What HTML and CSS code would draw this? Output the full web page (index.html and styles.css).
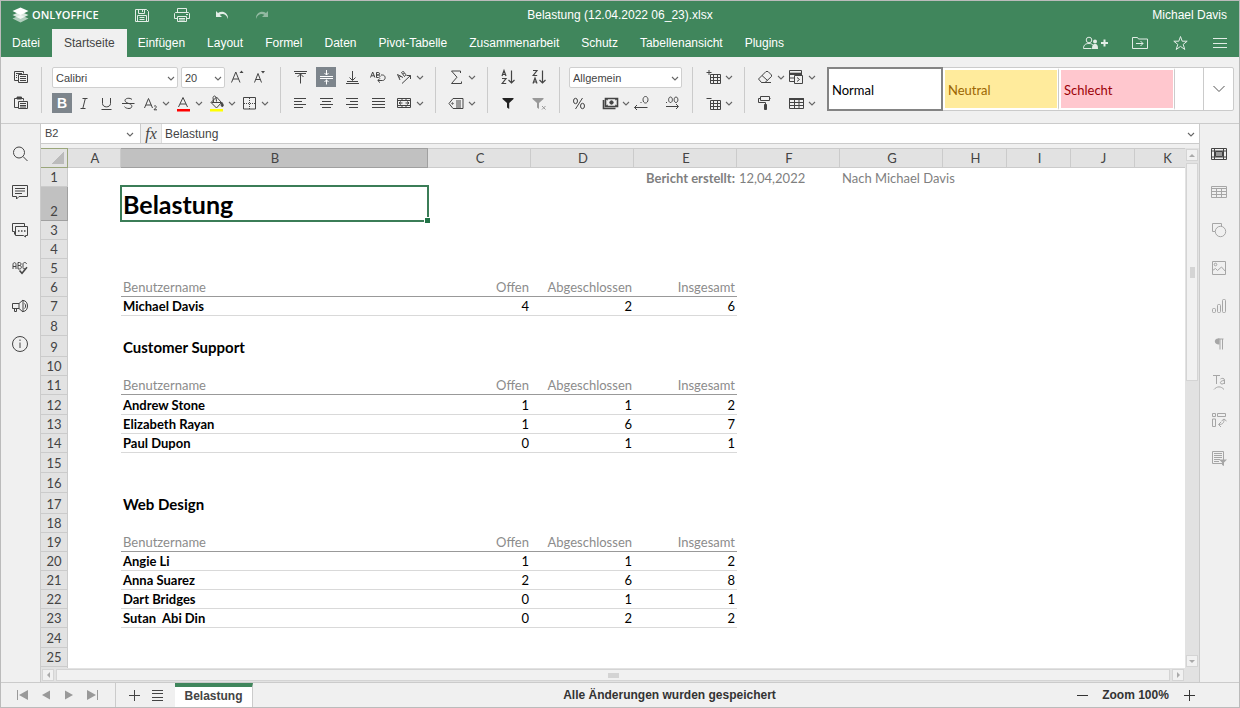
FILE: index.html
```html
<!DOCTYPE html>
<html lang="de">
<head>
<meta charset="utf-8">
<title>Belastung (12.04.2022 06_23).xlsx</title>
<link rel="stylesheet" href="styles.css">
</head>
<body>
<svg class="sprite" aria-hidden="true">
  <symbol id="chev" viewBox="0 0 11 20"><path d="M3 9l3 3 3-3" fill="none" stroke="currentColor" stroke-width="1.1"/></symbol>
  <symbol id="save" viewBox="0 0 20 20"><path d="M3.500 4.500h11l2 2v10h-13zM6.500 4.500v4h6v-4M10.500 5v2M5.500 16.500v-6h9v6M7.500 12.500h5M7.500 14.500h5"/></symbol>
  <symbol id="print" viewBox="0 0 20 20"><path d="M5.500 7.500v-4h9v4M5.500 13.500h-3v-5l1-1h13l1 1v5h-3M5.500 11.500h9v5h-9zM7 13.500h6M7 15h6M14 9.500h2"/></symbol>
  <symbol id="undo" viewBox="0 0 20 20"><path d="M4 6v6h6L7.700 9.700C11 8 14.500 9.500 16 14 16.500 8 10.500 5 6 8z" fill="currentColor" stroke="none"/></symbol>
  <symbol id="redo" viewBox="0 0 20 20"><path d="M16 6v6h-6l2.300-2.300C9 8 5.500 9.500 4 14 3.500 8 9.500 5 14 8z" fill="currentColor" stroke="none"/></symbol>
  <symbol id="share" viewBox="0 0 28 20"><circle cx="7" cy="7" r="2.800"/><path d="M1.500 15.500c0-4 2.500-5 5.500-5 2 0 3.500.6 4.500 2M1.500 15.500h8"/><g fill="currentColor" stroke="none"><circle cx="13" cy="8.500" r="2"/><path d="M10 16c0-4 1-5 3-5s3 1 3 5z"/><path d="M19 9h7v2h-7zM21.500 6.500h2v7h-2z"/></g></symbol>
  <symbol id="folder" viewBox="0 0 20 20"><path d="M2.500 15.500v-11h5l1 1.500h9v9.500zM6 10.500h7M10.500 8l2.500 2.500-2.500 2.500"/></symbol>
  <symbol id="star" viewBox="0 0 20 20"><path d="M10.500 3.500l1.700 4.700h5l-4 3.200 1.600 5.100-4.300-3.100-4.300 3.100 1.600-5.100-4-3.200h5z"/></symbol>
  <symbol id="menu" viewBox="0 0 20 20"><path d="M3 5.500h14M3 10.500h14M3 14.500h14"/></symbol>
  <symbol id="copy" viewBox="0 0 20 20"><path d="M7 13.500H3.500v-9h9v2M5 6.500h6M5 8.500h1M5 10.500h1M7.500 7.500h9v8h-9zM9 9.500h6M9 11.500h6M9 13.500h6"/></symbol>
  <symbol id="paste" viewBox="0 0 20 20"><path d="M7 14.500H3.500v-9h9v2M7.500 8.500h9v7h-9zM9 10.500h6M9 12.500h6M9 14h6"/><path d="M6 4h4.500v2H6z" fill="currentColor"/></symbol>
  <symbol id="fontup" viewBox="0 0 20 20"><path d="M4.500 15.500l4.300-10.500 4.200 10.500M6 12h5.500"/><path d="M12.500 6l2-2.500 2 2.500z" fill="currentColor" stroke="none"/></symbol>
  <symbol id="fontdown" viewBox="0 0 20 20"><path d="M5.500 15.500l3.500-9 3.500 9M6.800 12.500h4.500"/><path d="M12 4l2 2.500 2-2.500z" fill="currentColor" stroke="none"/></symbol>
  <symbol id="italic" viewBox="0 0 20 20"><path d="M8.500 5.500h5M6.500 15.500h5M11.300 5.500l-2.500 10"/></symbol>
  <symbol id="underline" viewBox="0 0 20 20"><path d="M6.500 5v5.500c0 4.500 8 4.500 8 0V5M5.500 16.500h10"/></symbol>
  <symbol id="strike" viewBox="0 0 20 20"><path d="M14 6.500c-2-2-7-1.500-7 1 0 1.500 2 2.300 3.500 2.800M4 10.500h12.500M11 10.500c4 1 3.500 5 0 5-2 0-3.500-.6-4.500-1.800"/></symbol>
  <symbol id="sub" viewBox="0 0 20 20"><path d="M4.500 15l4-9.500 4 9.500M6 12h5.200M14 13.500c1-1.500 3-.3 2 1l-2 2.300h3"/></symbol>
  <symbol id="fcolor" viewBox="0 0 20 20"><path d="M5.500 14l4.500-9.500 4.500 9.500M7 11h6"/><path d="M4 16h13v2.500H4z" fill="#f00" stroke="none"/></symbol>
  <symbol id="fill" viewBox="0 0 20 20"><path d="M5 9.500l5.500-5.500 5 5.500-5 5.500zM7.500 9L7 4.500c.5-2 2.500-2 3 0l.5 4M5.500 9.500h10"/><path d="M16 9.500c1.500 2 1.800 4 .3 4s-1.500-2-.3-4z" fill="currentColor"/><path d="M4 16h13v2.500H4z" fill="#ff0" stroke="none"/></symbol>
  <symbol id="borders" viewBox="0 0 20 20"><path d="M4.500 4.500h12v11.500h-12z"/><path d="M10.500 5v11M5 10.500h11" stroke-dasharray="1 1"/></symbol>
  <symbol id="top" viewBox="0 0 20 20"><path d="M4 4.500h13M5 6.500h11M10.500 7v9.500M7.500 10l3-3 3 3"/></symbol>
  <symbol id="middle" viewBox="0 0 20 20"><path d="M4 9.500h13M4 11.500h13M10.500 3v5M8.500 6l2 2 2-2M10.500 17.500v-5M8.500 15l2-2 2 2"/></symbol>
  <symbol id="bottom" viewBox="0 0 20 20"><path d="M4 16.500h13M5 14.500h11M10.500 4v9M7.500 10.500l3 3 3-3"/></symbol>
  <symbol id="wrap" viewBox="0 0 20 20"><path d="M2.500 10.500L4.700 5l2.200 5.500M3.300 8.800h2.800M8.500 5.500v5h2c2 0 2-2.500 0-2.500h-2 1.700c2 0 1.800-2.500 0-2.500zM13 8h1.500c3.500 0 3.500 5.500 0 5.500H10M12 11.300l-2.200 2.200 2.200 2.200"/></symbol>
  <symbol id="orient" viewBox="0 0 20 20"><path d="M6 13L3.500 7.500 9 10.500M5 10.500l2-1.500M10.500 9.500L7.500 5.500c2-2 3.500-.5 2 1.300 1.700-1.300 3.500.7 1 2.700zM8 16.500l8.500-8M12.500 8.500h4V12"/></symbol>
  <symbol id="left" viewBox="0 0 20 20"><path d="M4 5.500h12M4 8.500h8M4 11.500h12M4 14.500h9"/></symbol>
  <symbol id="center" viewBox="0 0 20 20"><path d="M4 5.500h13M6 8.500h9M4 11.500h13M6 14.500h9"/></symbol>
  <symbol id="right" viewBox="0 0 20 20"><path d="M4 5.500h12M8 8.500h8M4 11.500h12M7 14.500h9"/></symbol>
  <symbol id="justify" viewBox="0 0 20 20"><path d="M4 5.500h13M4 8.500h13M4 11.500h13M4 14.500h13"/></symbol>
  <symbol id="merge" viewBox="0 0 20 20"><path d="M3.500 5.500h13v9h-13zM3.500 7.500h13M3.500 12.500h13M8 5.500v2M12 5.500v2M8 12.500v2M12 12.500v2M5 10h3.500M11.500 10H15M7 8.500L5 10l2 1.500M13 8.500l2 1.500-2 1.500"/></symbol>
  <symbol id="sum" viewBox="0 0 20 20"><path d="M14.500 6V4h-9l5.500 6.200-5.500 6.300h10v-2"/></symbol>
  <symbol id="named" viewBox="0 0 20 20"><path d="M7 5.500h10v10H7L3 10.500zM10 8h5M10 10h5M10 12h5M10 14h5"/><circle cx="6.500" cy="10.500" r=".7"/></symbol>
  <symbol id="az" viewBox="0 0 20 20"><path d="M4 9l2-5.500L8 9M4.500 7.500h3M4 11.500h4L4.200 16.500h4M13.500 3.500v12M10.500 13l3 3 3-3" stroke-width="1.200"/></symbol>
  <symbol id="za" viewBox="0 0 20 20"><path d="M4 3.500h4L4.200 8.500h4M4 16.500l2-5.500 2 5.500M4.500 15h3M13.500 3.500v12M10.500 13l3 3 3-3" stroke-width="1.200"/></symbol>
  <symbol id="filter" viewBox="0 0 20 20"><path d="M4.500 5h11v1l-4.300 4v6L9 14.500V10L4.500 6z" fill="currentColor" stroke="none"/></symbol>
  <symbol id="nofilter" viewBox="0 0 20 20"><path d="M3.500 5h11v1L10 10v6l-2-1.500V10L3.500 6z" fill="currentColor" stroke="none"/><path d="M13 13l3.500 3.500M16.500 13L13 16.500"/></symbol>
  <symbol id="percent" viewBox="0 0 20 20"><ellipse cx="6.500" cy="8" rx="2" ry="2.700"/><ellipse cx="13.500" cy="13" rx="2" ry="2.700"/><path d="M13.500 5l-7 11"/></symbol>
  <symbol id="cash" viewBox="0 0 20 20"><path d="M5.500 5.500h12v8h-12zM3.500 7v8.500h12" stroke-width="1.600"/><circle cx="11.500" cy="9.500" r="1.700" fill="currentColor"/><path d="M6 6l2 1M17 6l-2 1M6 13l2-1M17 13l-2-1"/></symbol>
  <symbol id="decless" viewBox="0 0 20 20"><path d="M9.500 9.500h1M14.500 3.500c-3.300 0-3.300 6.500 0 6.500s3.300-6.500 0-6.500zM3.500 14.500h13M6 12l-2.500 2.500L6 17"/></symbol>
  <symbol id="decmore" viewBox="0 0 20 20"><path d="M4 9.500h1M8.500 4c-2.500 0-2.500 5.500 0 5.500S11 4 8.500 4zM14 4c-2.500 0-2.500 5.500 0 5.500s2.500-5.500 0-5.500zM4 13.500h12M14 11l2.500 2.500L14 16"/></symbol>
  <symbol id="cellins" viewBox="0 0 20 20"><path d="M7.500 7.500h10v9h-10zM7.500 10.500h10M7.500 13.500h10M10.500 7.500v9M14.500 7.500v9M3.500 5.500h5M6 3v5"/></symbol>
  <symbol id="celldel" viewBox="0 0 20 20"><path d="M7.500 7.500h10v9h-10zM7.500 10.500h10M7.500 13.500h10M10.500 7.500v9M14.500 7.500v9M3.500 5.500h5"/></symbol>
  <symbol id="eraser" viewBox="0 0 20 20"><path d="M3.500 12l7.500-7.500h2l3.500 3.500v1.500L10 15.500H6.500zM7 8.500l5.500 5M6.500 15.500H16"/></symbol>
  <symbol id="cond" viewBox="0 0 20 20"><path d="M8 14.500H3.500v-11h12V8M3.500 7.500h12M3.500 11h4.500M8.500 8.500h8v8h-8zM11 10.500l2.500 2-2.500 2"/><path d="M4 6h11v1.500H4z" fill="currentColor" stroke-width=".6"/></symbol>
  <symbol id="paint" viewBox="0 0 20 20"><path d="M5.500 3.500h9v4h-9zM5.500 5.500h-2v4h7v3M14.500 5.500h1"/><path d="M9.500 11.500h2v5h-2z" fill="currentColor"/></symbol>
  <symbol id="tpl" viewBox="0 0 20 20"><path d="M3.500 5.500h14v10h-14zM3.500 9.500h14M3.500 12.500h14M8.500 5.500v10M13 5.500v10"/><path d="M3.500 5.500h14v1h-14z" fill="currentColor"/></symbol>
  <symbol id="search" viewBox="0 0 20 20"><circle cx="9" cy="8.500" r="5.500"/><path d="M13 12.500l4.500 4.500"/></symbol>
  <symbol id="comment" viewBox="0 0 20 20"><path d="M2.500 3.500h15v11H9L6.500 17v-2.500h-4zM5 6.500h10M5 9h10M5 11.500h7"/></symbol>
  <symbol id="chat" viewBox="0 0 20 20"><path d="M4.500 14.500v-3h-2v-8h12v3M5.500 6.500h12v9h-2v1.500l-2-1.500h-8z"/><path d="M8 11h1.500M11 11h1.500M14 11h1.500" stroke-width="1.500"/></symbol>
  <symbol id="spell" viewBox="0 0 20 20"><path d="M3 11V6.500c0-2.500 3-2.500 3 0V11M3 8.500h3M8 4.500V11h1.500c2.500 0 2.500-3.500 0-3.500H8h1.500c2 0 2-3 0-3zM16.500 6c0-2-3.500-2-3.500 0v3.500c0 1.500 1 1.500 2 1"/><path d="M9.500 12.500l2.500 2.800 5-6" stroke-width="1.500"/></symbol>
  <symbol id="horn" viewBox="0 0 20 20"><path d="M2.500 7.500H9l4-3.500v12l-4-3.500H2.500zM9 7.500v5M4.500 12.500v3h2v-3M13 4.500c6 0 6 11 0 11M14.500 7.500c1.500 1 1.500 4 0 5"/></symbol>
  <symbol id="info" viewBox="0 0 20 20"><circle cx="10" cy="10" r="7.500"/><path d="M10 8.500V14M10 5.500V7"/></symbol>
  <symbol id="cellset" viewBox="0 0 20 20"><path d="M2.500 4.500h15v11h-15zM2.500 7h15M2.500 13h15M5.500 4.500v11M14.500 4.500v11"/><path d="M6.500 7.500h7v5h-7z" fill="#999"/></symbol>
  <symbol id="tableset" viewBox="0 0 20 20"><path d="M2.500 4.500h15v11h-15zM2.500 6.500h15M2.500 9.500h15M2.500 12.500h15M7.500 6.500v9M12.500 6.500v9"/></symbol>
  <symbol id="shape" viewBox="0 0 20 20"><path d="M6 11.500H3.500v-8h9V6"/><circle cx="11.500" cy="11.500" r="5.200"/></symbol>
  <symbol id="image" viewBox="0 0 20 20"><path d="M3.500 3.500h13v13h-13zM3.500 12.500l3-2 2 2 4-3.500 4 4.500"/><circle cx="6.500" cy="6.500" r="1.300"/></symbol>
  <symbol id="chart" viewBox="0 0 20 20"><rect x="3.500" y="12.500" width="3" height="4" rx="1"/><rect x="8.500" y="8.500" width="3" height="8" rx="1"/><rect x="13.500" y="3.500" width="3" height="13" rx="1"/></symbol>
  <symbol id="para" viewBox="0 0 20 20"><path d="M11 5v10.500M13.500 5v10.500M9 5h5.500"/><path d="M10.500 4.500v6C4.500 11 4.500 4.500 9 4.500z" fill="currentColor" stroke="none"/></symbol>
  <symbol id="textart" viewBox="0 0 20 20"><path d="M4 3.500h7M7.500 3.500V12M11.500 7c1-1 4-1 4 1v4M15.500 8.500c-5 0-5 3.500-2.500 3.500 1.500 0 2.500-1 2.500-2M5 17.500c3-3.500 7-3.500 10 0"/></symbol>
  <symbol id="pivot" viewBox="0 0 20 20"><path d="M3.500 3.500h3v3h-3zM8.500 3.500h8v3h-8zM3.500 9h3v7.500h-3zM10 14.500c4 0 5-2 5-5M12.500 11L15 9l2.500 2M12 12l-2.500 2.500L12 17"/></symbol>
  <symbol id="slicer" viewBox="0 0 20 20"><path d="M3.500 3.500h11v12h-11zM5 5.500h8M5 7.500h8M5 9.500h8M5 11.500h6M5 13.500h5"/><path d="M10 11.500h8l-3 3V18l-2-1v-2.500z" fill="currentColor" stroke="none"/></symbol>
  <symbol id="first" viewBox="0 0 20 20"><path d="M4.500 5v10"/><path d="M15 5v10l-9-5z" fill="currentColor" stroke="none"/></symbol>
  <symbol id="prev" viewBox="0 0 20 20"><path d="M14 5.500v9l-8-4.500z" fill="currentColor" stroke="none"/></symbol>
  <symbol id="next" viewBox="0 0 20 20"><path d="M6 5.500v9l8-4.500z" fill="currentColor" stroke="none"/></symbol>
  <symbol id="last" viewBox="0 0 20 20"><path d="M15.500 5v10"/><path d="M5 5v10l9-5z" fill="currentColor" stroke="none"/></symbol>
  <symbol id="plus" viewBox="0 0 20 20"><path d="M5 10.500h11M10.500 5v11"/></symbol>
  <symbol id="minus" viewBox="0 0 20 20"><path d="M5 10.500h11"/></symbol>
  <symbol id="list" viewBox="0 0 20 20"><path d="M5 5.500h11M5 8.500h11M5 12.500h11M5 15.500h11"/></symbol>
</svg>

<div class="app">
  <header class="header">
    <div class="titlebar">
      <div class="brand">
        <svg class="mark" viewBox="0 0 16 16"><path d="M8 8l8 3.500L8 15.500 0 11.500z" opacity=".6"/><path d="M8 4.500L16 8l-8 4-8-4z" opacity=".8"/><path d="M8 .5L16 4 8 8 0 4z"/></svg>
        <span>ONLYOFFICE</span>
      </div>
      <div class="quick">
        <button aria-label="Speichern"><svg class="ic"><use href="#save"/></svg></button>
        <button aria-label="Drucken"><svg class="ic"><use href="#print"/></svg></button>
        <button aria-label="Rückgängig"><svg class="ic"><use href="#undo"/></svg></button>
        <button class="faded" aria-label="Wiederholen"><svg class="ic"><use href="#redo"/></svg></button>
      </div>
      <div class="doc-title">Belastung (12.04.2022 06_23).xlsx</div>
      <div class="user">Michael Davis</div>
    </div>
    <div class="tabbar">
      <nav class="tabs">
        <button>Datei</button><button class="active">Startseite</button><button>Einfügen</button><button>Layout</button><button>Formel</button><button>Daten</button><button>Pivot-Tabelle</button><button>Zusammenarbeit</button><button>Schutz</button><button>Tabellenansicht</button><button>Plugins</button>
      </nav>
      <div class="actions">
        <button aria-label="Freigeben"><svg class="ic wide"><use href="#share"/></svg></button>
        <button aria-label="Dateispeicherort öffnen"><svg class="ic"><use href="#folder"/></svg></button>
        <button aria-label="Favorit"><svg class="ic"><use href="#star"/></svg></button>
        <button aria-label="Ansicht"><svg class="ic"><use href="#menu"/></svg></button>
      </div>
    </div>
  </header>

  <div class="toolbar">
    <div class="group">
      <div class="line"><button aria-label="Kopieren"><svg class="ic"><use href="#copy"/></svg></button></div>
      <div class="line"><button aria-label="Einfügen"><svg class="ic"><use href="#paste"/></svg></button></div>
    </div>
    <div class="group font">
      <div class="line">
        <span class="combo font-name"><select aria-label="Schriftart"><option>Calibri</option></select><svg class="chev"><use href="#chev"/></svg></span>
        <span class="combo font-size"><select aria-label="Schriftgröße"><option>20</option></select><svg class="chev"><use href="#chev"/></svg></span>
        <button aria-label="Schrift vergrößern"><svg class="ic"><use href="#fontup"/></svg></button>
        <button aria-label="Schrift verkleinern"><svg class="ic"><use href="#fontdown"/></svg></button>
      </div>
      <div class="line">
        <button class="on bold">B</button>
        <button aria-label="Kursiv"><svg class="ic"><use href="#italic"/></svg></button>
        <button aria-label="Unterstrichen"><svg class="ic"><use href="#underline"/></svg></button>
        <button aria-label="Durchgestrichen"><svg class="ic"><use href="#strike"/></svg></button>
        <button aria-label="Tiefgestellt"><svg class="ic"><use href="#sub"/></svg><svg class="chev"><use href="#chev"/></svg></button>
        <button aria-label="Schriftfarbe"><svg class="ic"><use href="#fcolor"/></svg><svg class="chev"><use href="#chev"/></svg></button>
        <button aria-label="Füllfarbe"><svg class="ic"><use href="#fill"/></svg><svg class="chev"><use href="#chev"/></svg></button>
        <button aria-label="Rahmen"><svg class="ic"><use href="#borders"/></svg><svg class="chev"><use href="#chev"/></svg></button>
      </div>
    </div>
    <div class="group align">
      <div class="line">
        <button aria-label="Oben"><svg class="ic"><use href="#top"/></svg></button>
        <button class="on" aria-label="Mitte"><svg class="ic"><use href="#middle"/></svg></button>
        <button aria-label="Unten"><svg class="ic"><use href="#bottom"/></svg></button>
        <button aria-label="Umbruch"><svg class="ic"><use href="#wrap"/></svg></button>
        <button aria-label="Ausrichtung"><svg class="ic"><use href="#orient"/></svg><svg class="chev"><use href="#chev"/></svg></button>
      </div>
      <div class="line">
        <button aria-label="Links"><svg class="ic"><use href="#left"/></svg></button>
        <button aria-label="Zentriert"><svg class="ic"><use href="#center"/></svg></button>
        <button aria-label="Rechts"><svg class="ic"><use href="#right"/></svg></button>
        <button aria-label="Blocksatz"><svg class="ic"><use href="#justify"/></svg></button>
        <button aria-label="Verbinden"><svg class="ic"><use href="#merge"/></svg><svg class="chev"><use href="#chev"/></svg></button>
      </div>
    </div>
    <div class="group">
      <div class="line"><button aria-label="Summe"><svg class="ic"><use href="#sum"/></svg><svg class="chev"><use href="#chev"/></svg></button></div>
      <div class="line"><button aria-label="Benannte Bereiche"><svg class="ic"><use href="#named"/></svg><svg class="chev"><use href="#chev"/></svg></button></div>
    </div>
    <div class="group sort">
      <div class="line"><button aria-label="Aufsteigend"><svg class="ic"><use href="#az"/></svg></button><button aria-label="Absteigend"><svg class="ic"><use href="#za"/></svg></button></div>
      <div class="line"><button class="dark" aria-label="Filter"><svg class="ic"><use href="#filter"/></svg></button><button class="faded" aria-label="Filter leeren"><svg class="ic"><use href="#nofilter"/></svg></button></div>
    </div>
    <div class="group number">
      <div class="line"><span class="combo"><select aria-label="Zahlenformat"><option>Allgemein</option></select><svg class="chev"><use href="#chev"/></svg></span></div>
      <div class="line formats">
        <button aria-label="Prozent"><svg class="ic"><use href="#percent"/></svg></button>
        <button aria-label="Währung"><svg class="ic"><use href="#cash"/></svg><svg class="chev"><use href="#chev"/></svg></button>
        <button aria-label="Weniger Dezimalstellen"><svg class="ic"><use href="#decless"/></svg></button>
        <button aria-label="Mehr Dezimalstellen"><svg class="ic"><use href="#decmore"/></svg></button>
      </div>
    </div>
    <div class="group">
      <div class="line"><button aria-label="Zellen einfügen"><svg class="ic"><use href="#cellins"/></svg><svg class="chev"><use href="#chev"/></svg></button></div>
      <div class="line"><button aria-label="Zellen löschen"><svg class="ic"><use href="#celldel"/></svg><svg class="chev"><use href="#chev"/></svg></button></div>
    </div>
    <div class="group format">
      <div class="line"><button aria-label="Leeren"><svg class="ic"><use href="#eraser"/></svg><svg class="chev"><use href="#chev"/></svg></button><button aria-label="Bedingte Formatierung"><svg class="ic"><use href="#cond"/></svg><svg class="chev"><use href="#chev"/></svg></button></div>
      <div class="line"><button aria-label="Format kopieren"><svg class="ic"><use href="#paint"/></svg></button><button aria-label="Tabellenvorlage"><svg class="ic"><use href="#tpl"/></svg><svg class="chev"><use href="#chev"/></svg></button></div>
    </div>
    <div class="gallery">
      <button class="style normal">Normal</button>
      <button class="style neutral">Neutral</button>
      <button class="style bad">Schlecht</button>
      <span class="rest"></span>
      <button class="more" aria-label="Weitere Stile"><svg viewBox="0 0 12 8"><path d="M.5 1L6 6.500 11.500 1"/></svg></button>
    </div>
  </div>

  <main class="main">
    <aside class="rail left">
      <button aria-label="Suchen"><svg class="ic"><use href="#search"/></svg></button>
      <button aria-label="Kommentare"><svg class="ic"><use href="#comment"/></svg></button>
      <button aria-label="Chat"><svg class="ic"><use href="#chat"/></svg></button>
      <button aria-label="Rechtschreibprüfung"><svg class="ic"><use href="#spell"/></svg></button>
      <button aria-label="Feedback"><svg class="ic"><use href="#horn"/></svg></button>
      <button aria-label="Info"><svg class="ic"><use href="#info"/></svg></button>
    </aside>

    <section class="editor">
      <div class="formula">
        <span class="name-box"><input aria-label="Zellname" value="B2"><svg class="chev"><use href="#chev"/></svg></span>
        <button class="fx">fx</button>
        <input class="formula-input" aria-label="Formel" value="Belastung">
        <svg class="chev"><use href="#chev"/></svg>
      </div>
      <div class="viewport">
        <div class="sheet">
          <table>
            <colgroup><col class="c-num"><col class="c-a"><col class="c-b"><col class="c-m"><col class="c-m"><col class="c-m"><col class="c-m"><col class="c-m"><col class="c-s"><col class="c-s"><col class="c-s"><col class="c-s"></colgroup>
            <thead><tr><th class="corner"></th><th>A</th><th class="sel">B</th><th>C</th><th>D</th><th>E</th><th>F</th><th>G</th><th>H</th><th>I</th><th>J</th><th>K</th></tr></thead>
            <tbody>
              <tr><th>1</th><td></td><td></td><td></td><td></td><td class="created num">Bericht erstellt:</td><td class="note">12,04,2022</td><td class="note">Nach Michael Davis</td></tr>
              <tr class="title"><th class="sel">2</th><td></td><td class="cell-active">Belastung</td></tr>
              <tr><th>3</th></tr>
              <tr><th>4</th></tr>
              <tr><th>5</th></tr>
              <tr class="labels"><th>6</th><td></td><td>Benutzername</td><td>Offen</td><td>Abgeschlossen</td><td>Insgesamt</td></tr>
              <tr class="data"><th>7</th><td></td><td>Michael Davis</td><td>4</td><td>2</td><td>6</td></tr>
              <tr class="tall"><th>8</th></tr>
              <tr class="section"><th>9</th><td></td><td>Customer Support</td></tr>
              <tr><th>10</th></tr>
              <tr class="labels"><th>11</th><td></td><td>Benutzername</td><td>Offen</td><td>Abgeschlossen</td><td>Insgesamt</td></tr>
              <tr class="data tall"><th>12</th><td></td><td>Andrew Stone</td><td>1</td><td>1</td><td>2</td></tr>
              <tr class="data"><th>13</th><td></td><td>Elizabeth Rayan</td><td>1</td><td>6</td><td>7</td></tr>
              <tr class="data"><th>14</th><td></td><td>Paul Dupon</td><td>0</td><td>1</td><td>1</td></tr>
              <tr class="tall"><th>15</th></tr>
              <tr class="tall"><th>16</th></tr>
              <tr class="section"><th>17</th><td></td><td>Web Design</td></tr>
              <tr><th>18</th></tr>
              <tr class="labels"><th>19</th><td></td><td>Benutzername</td><td>Offen</td><td>Abgeschlossen</td><td>Insgesamt</td></tr>
              <tr class="data"><th>20</th><td></td><td>Angie Li</td><td>1</td><td>1</td><td>2</td></tr>
              <tr class="data"><th>21</th><td></td><td>Anna Suarez</td><td>2</td><td>6</td><td>8</td></tr>
              <tr class="data"><th>22</th><td></td><td>Dart Bridges</td><td>0</td><td>1</td><td>1</td></tr>
              <tr class="data"><th>23</th><td></td><td>Sutan&nbsp; Abi Din</td><td>0</td><td>2</td><td>2</td></tr>
              <tr class="tall"><th>24</th></tr>
              <tr><th>25</th></tr>
              <tr><th></th></tr>
            </tbody>
          </table>
        </div>
        <div class="vscroll"><span class="arrow up"></span><span class="thumb"></span><span class="track"></span><span class="arrow down"></span></div>
        <div class="hscroll"><span class="arrow prev"></span><span class="thumb"></span><span class="arrow next"></span></div>
        <div class="scroll-corner"></div>
      </div>
    </section>

    <aside class="rail right">
      <button class="current" aria-label="Zelleneinstellungen"><svg class="ic"><use href="#cellset"/></svg></button>
      <button aria-label="Tabelle"><svg class="ic"><use href="#tableset"/></svg></button>
      <button aria-label="Form"><svg class="ic"><use href="#shape"/></svg></button>
      <button aria-label="Bild"><svg class="ic"><use href="#image"/></svg></button>
      <button aria-label="Diagramm"><svg class="ic"><use href="#chart"/></svg></button>
      <button aria-label="Absatz"><svg class="ic"><use href="#para"/></svg></button>
      <button aria-label="TextArt"><svg class="ic"><use href="#textart"/></svg></button>
      <button aria-label="Pivot"><svg class="ic"><use href="#pivot"/></svg></button>
      <button aria-label="Datenschnitt"><svg class="ic"><use href="#slicer"/></svg></button>
    </aside>
  </main>

  <footer class="status">
    <div class="sheet-nav">
      <button aria-label="Erstes Blatt"><svg class="ic"><use href="#first"/></svg></button>
      <button aria-label="Vorheriges Blatt"><svg class="ic"><use href="#prev"/></svg></button>
      <button aria-label="Nächstes Blatt"><svg class="ic"><use href="#next"/></svg></button>
      <button aria-label="Letztes Blatt"><svg class="ic"><use href="#last"/></svg></button>
    </div>
    <div class="sheet-tools">
      <button aria-label="Blatt hinzufügen"><svg class="ic"><use href="#plus"/></svg></button>
      <button aria-label="Blattliste"><svg class="ic"><use href="#list"/></svg></button>
    </div>
    <button class="sheet-tab">Belastung</button>
    <div class="message">Alle Änderungen wurden gespeichert</div>
    <div class="zoom">
      <button aria-label="Verkleinern"><svg class="ic"><use href="#minus"/></svg></button>
      <span>Zoom 100%</span>
      <button aria-label="Vergrößern"><svg class="ic"><use href="#plus"/></svg></button>
    </div>
  </footer>
</div>
</body>
</html>
```
FILE: styles.css
```css
* { box-sizing: border-box; }

body {
  margin: 0;
  font: 12px/16px "Liberation Sans", Arial, sans-serif;
  color: #444;
}

button {
  display: flex;
  align-items: center;
  justify-content: center;
  margin: 0;
  padding: 0;
  border: 0;
  background: none;
  color: inherit;
  font: inherit;
}

input, select {
  margin: 0;
  border: 0;
  border-radius: 0;
  outline: 0;
  background: none;
  color: inherit;
  font: inherit;
  appearance: none;
}

.sprite { position: absolute; width: 0; height: 0; }

.ic {
  flex: none;
  width: 20px;
  height: 20px;
  fill: none;
  stroke: currentColor;
}

.ic.wide { width: 28px; }
.chev { flex: none; width: 11px; height: 20px; color: #666; }

.app {
  display: flex;
  flex-direction: column;
  height: 100vh;
  border: 1px solid #bbb;
  background: #f0f0f0;
  overflow: hidden;
}

/* Header */
.header { flex: none; background: #40865c; color: #fff; }
.header .ic { opacity: .85; }

.titlebar {
  display: grid;
  grid-template-columns: 120px 1fr auto 1fr;
  align-items: center;
  height: 28px;
}

.brand {
  display: flex;
  align-items: center;
  gap: 3px;
  padding-left: 11px;
  font: 600 11px/16px "Open Sans", sans-serif;
}

.mark { width: 17px; height: 16px; fill: #fff; }
.quick { display: flex; gap: 20px; padding-left: 11px; }
.faded { opacity: .5; }
.doc-title { margin-left: -120px; }
.user { padding-right: 12px; text-align: right; }

.tabbar { display: flex; justify-content: space-between; height: 28px; }
.tabs { display: flex; }
.tabs button { padding: 0 11px; }
.tabs button:first-child { padding-right: 12px; }
.tabs .active { padding: 0 12px; background: #f0f0f0; color: #444; }

.actions { display: flex; align-items: center; gap: 20px; padding-right: 9px; }

/* Toolbar */
.toolbar {
  display: flex;
  flex: none;
  height: 67px;
  padding: 10px 5px 10px 0;
  border-bottom: 1px solid #cbcbcb;
}

.group {
  display: flex;
  flex-direction: column;
  gap: 6px;
  padding: 0 10px;
  border-right: 1px solid #cbcbcb;
}

.line { display: flex; height: 20px; gap: 2px; }
.align { padding-left: 9px; }
.align .line { gap: 6px; }
.sort .line { gap: 11px; }
.format .line { justify-content: space-between; gap: 0; }
.format { border-right: 0; }
.number { width: 133px; padding-left: 9px; }
.formats { display: grid; grid-template-columns: 31px 31px 31px 20px; gap: 0; justify-items: start; }

.dark { color: #222; }
.on { background: #7d858c; color: #fff; }
.bold { width: 20px; font-size: 14px; font-weight: bold; }

.combo {
  display: flex;
  flex: 1;
  align-items: center;
  height: 21px;
  padding-right: 1px;
  border: 1px solid #cfcfcf;
  border-radius: 2px;
  background: #fff;
}

.combo select { flex: 1; min-width: 0; padding: 0 3px; font-size: 11px; }
.font-name { flex: none; width: 126px; }
.font-size { flex: none; width: 44px; margin: 0 0 0 1px; }

.gallery {
  display: flex;
  flex: 1;
  height: 44px;
  border: 1px solid #cbcbcb;
  border-radius: 2px;
  background: #fff;
}

.style {
  flex: none;
  justify-content: flex-start;
  width: 116px;
  padding: 2px 0 0 3px;
  border: 2px solid #fff;
  border-right: 1px solid #cbcbcb;
  background-clip: padding-box;
  font: 13px/16px Lato, sans-serif;
  box-shadow: inset -1px 0 #fff;
}

.normal { margin: -1px 0 -1px -1px; border: 2px solid #848484; color: #000; }
.neutral { background-color: #ffeb9c; color: #9c6500; }
.bad { background-color: #ffc7ce; color: #9c0006; }
.rest { flex: 1; }
.more { width: 30px; border-left: 1px solid #cbcbcb; }
.more svg { width: 12px; height: 8px; fill: none; stroke: #555; }

/* Body */
.main { display: flex; flex: 1; min-height: 0; }

.rail {
  display: flex;
  flex: none;
  flex-direction: column;
  align-items: center;
  gap: 18px;
  width: 40px;
  padding: 20px 1px 0 0;
}

.left { border-right: 1px solid #cbcbcb; }
.right { border-left: 1px solid #cbcbcb; color: #a6a6a6; }
.current { color: #444; }

.editor { display: flex; flex: 1; flex-direction: column; min-width: 0; }

.formula {
  display: flex;
  flex: none;
  height: 20px;
  margin-bottom: 4px;
  border-bottom: 1px solid #cbcbcb;
  background: #fff;
}

.formula > .chev { margin-right: 3px; }
.name-box { display: flex; width: 100px; padding-right: 5px; border-right: 1px solid #cbcbcb; }
.name-box input { flex: 1; min-width: 0; padding: 0 4px 1px; font-size: 11px; }
.fx { width: 21px; border-right: 1px solid #dcdcdc; background: #f0f0f0; font: italic 16px/18px "Liberation Serif", serif; }
.formula-input { flex: 1; min-width: 0; padding: 1px 3px 0; }

.viewport {
  display: grid;
  flex: 1;
  grid-template: minmax(0, 1fr) 14px / minmax(0, 1fr) 14px;
  min-height: 0;
}

/* Sheet */
.sheet { overflow: hidden; background: #fff; }

table {
  width: 1135px;
  border-spacing: 0;
  table-layout: fixed;
  font: 13px/18px Lato, sans-serif;
  color: #000;
}

.c-num { width: 27px; }
.c-a { width: 53px; }
.c-b { width: 307px; }
.c-m { width: 103px; }
.c-s { width: 64px; }

th, td { height: 19px; padding: 0 2px; white-space: nowrap; vertical-align: bottom; text-align: left; }

th {
  padding: 0;
  border-right: 1px solid #cbcbcb;
  border-bottom: 1px solid #cbcbcb;
  background: #e2e2e2;
  color: #444;
  font-weight: normal;
  text-align: center;
}

thead th { height: 20px; padding-left: 2px; border-top: 1px solid #cbcbcb; }
th.sel { border-color: #a0a0a0; background: #c1c1c1; }
.corner { background: linear-gradient(135deg, transparent 50%, #bbb 50%) no-repeat 11px 3px / 12px 12px #e2e2e2; border-color: #9aa67a; }

.tall > * { height: 20px; }
.section > * { height: 21px; }
.section td { font-size: 15px; font-weight: bold; line-height: 20px; }
.title > * { height: 34px; }
.title td { font-size: 25px; font-weight: bold; line-height: 34px; }

.created { color: #7f7f7f; font-weight: bold; }
.note { color: #7f7f7f; }
.num { text-align: right; }

.labels td { color: #8c8c8c; }
.labels td:nth-child(n+3) { border-bottom: 1px solid #999; }
.data td:nth-child(n+3) { border-bottom: 1px solid #d9d9d9; }
.data td:nth-child(3) { font-weight: bold; }
.labels td:nth-child(n+4), .data td:nth-child(n+4) { text-align: right; }

.cell-active { position: relative; }
.cell-active::before { content: ""; position: absolute; inset: -2px -1px -1px -1px; border: 2px solid #3b7d57; }
.cell-active::after { content: ""; position: absolute; right: -2px; bottom: -2px; width: 5px; height: 5px; border: solid #fff; border-width: 1px 0 0 1px; background: #217346; }

/* Scroll bars */
.vscroll { display: flex; flex-direction: column; gap: 2px; padding: 1px; background: #e2e2e2; }
.hscroll { display: flex; gap: 2px; padding: 1px; background: #e2e2e2; }
.scroll-corner { background: #e2e2e2; }
.thumb { display: flex; align-items: center; justify-content: center; border: 1px solid #d4d4d4; background: #f1f1f1; }
.vscroll .thumb { flex: 218; }
.vscroll .track { flex: 272; }
.hscroll .thumb { flex: 1; }
.thumb::after { content: ""; background: #d4d4d4; }
.vscroll .thumb::after { width: 5px; height: 11px; }
.hscroll .thumb::after { width: 11px; height: 5px; }
.arrow { display: flex; flex: none; align-items: center; justify-content: center; width: 12px; height: 12px; border: 1px solid #d4d4d4; background: #f1f1f1; }
.arrow::after { content: ""; border: 3px solid transparent; }
.up::after { border-top: 0; border-bottom-color: #aaa; }
.down::after { border-bottom: 0; border-top-color: #aaa; }
.prev::after { border-left: 0; border-right-color: #aaa; }
.next::after { border-right: 0; border-left-color: #aaa; }

/* Status bar */
.status {
  display: grid;
  flex: none;
  grid-template-columns: 115px 59px 78px 1fr 167px;
  height: 25px;
  border-top: 1px solid #cbcbcb;
}

.sheet-nav { display: flex; align-items: center; gap: 3px; padding-left: 12px; border-right: 1px solid #cbcbcb; color: #999; }
.sheet-tools { display: flex; align-items: center; gap: 3px; padding-left: 8px; }
.sheet-tab { padding-bottom: 3px; border-top: 4px solid #40865c; border-right: 1px solid #cbcbcb; background: #fff; font-weight: bold; }
.message { align-self: center; padding-left: 14px; color: #333; font-weight: bold; text-align: center; }
.zoom { display: flex; align-items: center; justify-content: space-between; padding-right: 40px; font-weight: bold; color: #333; white-space: nowrap; }
```
